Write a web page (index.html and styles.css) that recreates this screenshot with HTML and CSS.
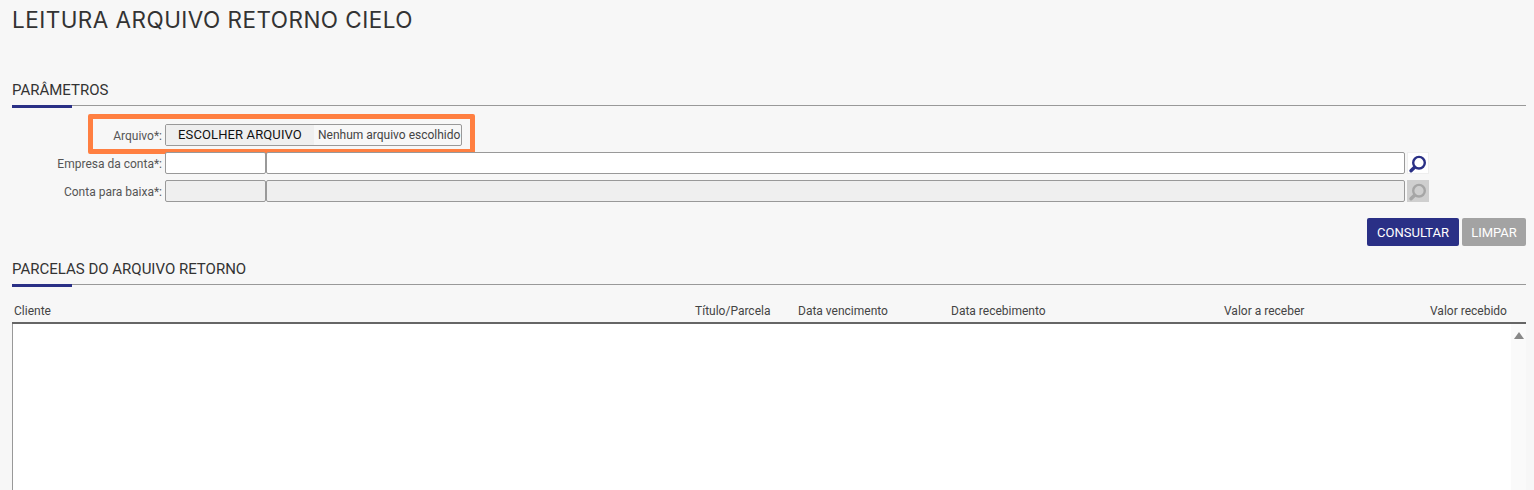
FILE: index.html
```html
<!DOCTYPE html>
<html lang="pt">
<head>
<meta charset="utf-8">
<title>Leitura arquivo retorno Cielo</title>
<link rel="stylesheet" href="styles.css">
</head>
<body>
<h1 class="page-title">LEITURA ARQUIVO RETORNO CIELO</h1>
<section class="params">
  <h2 class="section-title">PARÂMETROS</h2>
  <div class="form">
    <div class="row row-file">
      <span class="highlight"></span>
      <label class="label">Arquivo*:</label>
      <div class="file">
        <span class="file-btn">ESCOLHER ARQUIVO</span>
        <span class="file-name">Nenhum arquivo escolhido</span>
      </div>
    </div>
    <div class="row">
      <label class="label">Empresa da conta*:</label>
      <span class="input code"></span>
      <span class="input desc"></span>
      <span class="search">
        <svg width="22" height="22" viewBox="0 0 22 22"><circle cx="12" cy="10.7" r="5.8" fill="none" stroke="#2a3086" stroke-width="2.4"/><path d="M7.6 15.2 4 18.8" stroke="#2a3086" stroke-width="3.4" stroke-linecap="round"/></svg>
      </span>
    </div>
    <div class="row">
      <label class="label">Conta para baixa*:</label>
      <span class="input code disabled"></span>
      <span class="input desc disabled"></span>
      <span class="search search-off">
        <svg width="22" height="22" viewBox="0 0 22 22"><circle cx="12" cy="10.7" r="5.8" fill="none" stroke="#a6a6a6" stroke-width="2.4"/><path d="M7.6 15.2 4 18.8" stroke="#a6a6a6" stroke-width="3.4" stroke-linecap="round"/></svg>
      </span>
    </div>
  </div>
  <div class="actions">
    <button class="btn primary">CONSULTAR</button>
    <button class="btn muted">LIMPAR</button>
  </div>
</section>
<section class="results">
  <h2 class="section-title">PARCELAS DO ARQUIVO RETORNO</h2>
  <div class="thead">
    <span class="th th-client">Cliente</span>
    <span class="th th-title">Título/Parcela</span>
    <span class="th th-due">Data vencimento</span>
    <span class="th th-recv">Data recebimento</span>
    <span class="th th-value">Valor a receber</span>
    <span class="th th-paid">Valor recebido</span>
  </div>
  <div class="tbody">
    <div class="scroll"><span class="arrow"></span></div>
  </div>
</section>
</body>
</html>
```
FILE: styles.css
```css
* { box-sizing: border-box; }
html, body { height: 100%; }
body {
  margin: 0;
  padding: 0 8px 0 12px;
  height: 490px;
  overflow: hidden;
  background: #f7f7f7;
  font-family: Roboto, "Liberation Sans", sans-serif;
  color: #444;
  display: flex;
  flex-direction: column;
}
.page-title {
  margin: 0;
  padding-top: 6px;
  height: 80px;
  font-family: Inter, "Open Sans", sans-serif;
  font-size: 22.5px;
  letter-spacing: 0.46px;
  line-height: 27px;
  font-weight: 400;
  color: #333;
}
.section-title {
  position: relative;
  margin: 0;
  height: 26px;
  border-bottom: 1px solid #999;
  font-size: 15px;
  line-height: 20px;
  font-weight: 400;
  color: #333;
}
.section-title::after {
  content: "";
  position: absolute;
  left: 0;
  bottom: -3px;
  width: 60px;
  height: 3px;
  background: #2a3086;
}
.form {
  padding-top: 18px;
  display: flex;
  flex-direction: column;
  gap: 6px;
}
.row {
  position: relative;
  display: flex;
  align-items: center;
  height: 22px;
}
.label {
  width: 153px;
  padding-top: 2px;
  padding-right: 3px;
  text-align: right;
  font-size: 12px;
  color: #555;
}
.highlight {
  position: absolute;
  left: 76px;
  top: -10px;
  width: 387px;
  height: 40px;
  border: 5px solid #ff7f41;
  border-radius: 2px;
}
.file {
  display: flex;
  align-items: center;
  width: 297px;
  height: 22px;
  border: 1px solid #999;
  border-radius: 2px;
  overflow: hidden;
}
.file-btn {
  width: 148px;
  height: 100%;
  background: #efefef;
  color: #111;
  font-size: 13px;
  letter-spacing: 0.12px;
  line-height: 20px;
  text-align: center;
}
.file-name {
  padding-left: 4px;
  font-size: 12px;
  white-space: nowrap;
  color: #444;
}
.input {
  height: 22px;
  border: 1px solid #999;
  border-radius: 2px;
  background: #fff;
}
.code { width: 101px; }
.desc { width: 1139px; }
.disabled { background: #efefef; }
.search {
  margin-left: 2px;
  width: 22px;
  height: 22px;
  background: #fff;
  border: 1px solid #eee;
  display: flex;
}
.search-off {
  background: #cfcfcf;
  border-color: #cfcfcf;
}
.search svg { margin: -1px; flex: none; }
.actions {
  margin-top: 16px;
  display: flex;
  justify-content: flex-end;
  gap: 3px;
}
.btn {
  height: 28px;
  border: 0;
  border-radius: 2px;
  color: #fff;
  font-family: Roboto, sans-serif;
  font-size: 13px;
  padding: 0;
}
.primary { width: 92px; background: #2a3086; }
.muted { width: 64px; background: #a3a3a3; }
.results {
  flex: 1;
  display: flex;
  flex-direction: column;
  min-height: 0;
  padding-top: 13px;
}
.thead {
  position: relative;
  height: 39px;
  border-bottom: 2px solid #666;
}
.th {
  position: absolute;
  top: 18px;
  font-size: 12px;
  line-height: 16px;
  color: #444;
  white-space: nowrap;
}
.th-client { left: 2px; }
.th-title { left: 683px; }
.th-due { left: 786px; }
.th-recv { left: 939px; }
.th-value { left: 1212px; }
.th-paid { left: 1418px; }
.tbody {
  flex: 1;
  display: flex;
  justify-content: flex-end;
  background: #fff;
  border-left: 1px solid #999;
}
.scroll {
  width: 15px;
  background: #fafafa;
  display: flex;
  justify-content: center;
  align-items: flex-start;
  padding-top: 8px;
}
.arrow {
  width: 0;
  height: 0;
  border-left: 5px solid transparent;
  border-right: 5px solid transparent;
  border-bottom: 7px solid #888;
}
```
